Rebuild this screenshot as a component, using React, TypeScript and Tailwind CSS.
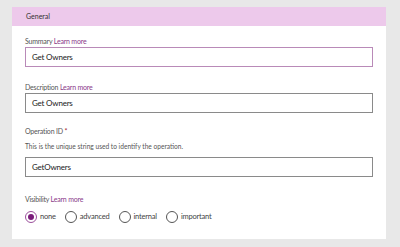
import React from "react";

const font = { fontFamily: 'Lato, "Open Sans", sans-serif' };

function Label({ text, learn, required }: { text: string; learn?: boolean; required?: boolean }) {
  return (
    <div className="h-[10px] leading-[10px] text-[7px] tracking-[-0.2px] text-[#555]">
      {text}
      {required && <span className="text-[#a4262c]"> *</span>}
      {learn && <span className="text-[#8a3a8a]"> Learn more</span>}
    </div>
  );
}

function Input({ value, focused }: { value: string; focused?: boolean }) {
  return (
    <div
      className={`h-[20px] w-full border flex items-center pl-[6px] text-[8px] tracking-[-0.2px] text-[#222] ${
        focused ? "border-[#b98ab8]" : "border-[#8a8a8a]"
      }`}
    >
      {value}
    </div>
  );
}

function Radio({ label, checked }: { label: string; checked?: boolean }) {
  return (
    <div className="flex items-center gap-[3px]">
      <div
        className={`w-[12px] h-[12px] rounded-full border flex items-center justify-center ${
          checked ? "border-[#9b4f9b]" : "border-[#555]"
        }`}
      >
        {checked && <div className="w-[6px] h-[6px] rounded-full bg-[#7a1c7a]" />}
      </div>
      <span className="text-[7.5px] tracking-[-0.2px] text-[#444]">{label}</span>
    </div>
  );
}

export default function App() {
  return (
    <div className="w-[400px] h-[247px] bg-[#e8e8e8] pt-[7px] pl-[12px]" style={font}>
      <div className="w-[374px] h-[232px] bg-white">
        <div className="h-[19px] bg-[#edc9eb] px-[14px] flex items-center text-[7px] text-[#333]">
          General
        </div>
        <div className="px-[13px]">
          <div className="mt-[10px]">
            <Label text="Summary" learn />
            <div className="mt-[1px]">
              <Input value="Get Owners" focused />
            </div>
          </div>
          <div className="mt-[15px]">
            <Label text="Description" learn />
            <div className="mt-[1px]">
              <Input value="Get Owners" />
            </div>
          </div>
          <div className="mt-[13px]">
            <Label text="Operation ID" required />
            <div className="mt-[5px] h-[10px] leading-[10px] text-[6.6px] text-[#555]">
              This is the unique string used to identify the operation.
            </div>
            <div className="mt-[6px]">
              <Input value="GetOwners" />
            </div>
          </div>
          <div className="mt-[17px]">
            <Label text="Visibility" learn />
            <div className="mt-[7px] flex items-center gap-[9px]">
              <Radio label="none" checked />
              <Radio label="advanced" />
              <Radio label="internal" />
              <Radio label="important" />
            </div>
          </div>
        </div>
      </div>
    </div>
  );
}
